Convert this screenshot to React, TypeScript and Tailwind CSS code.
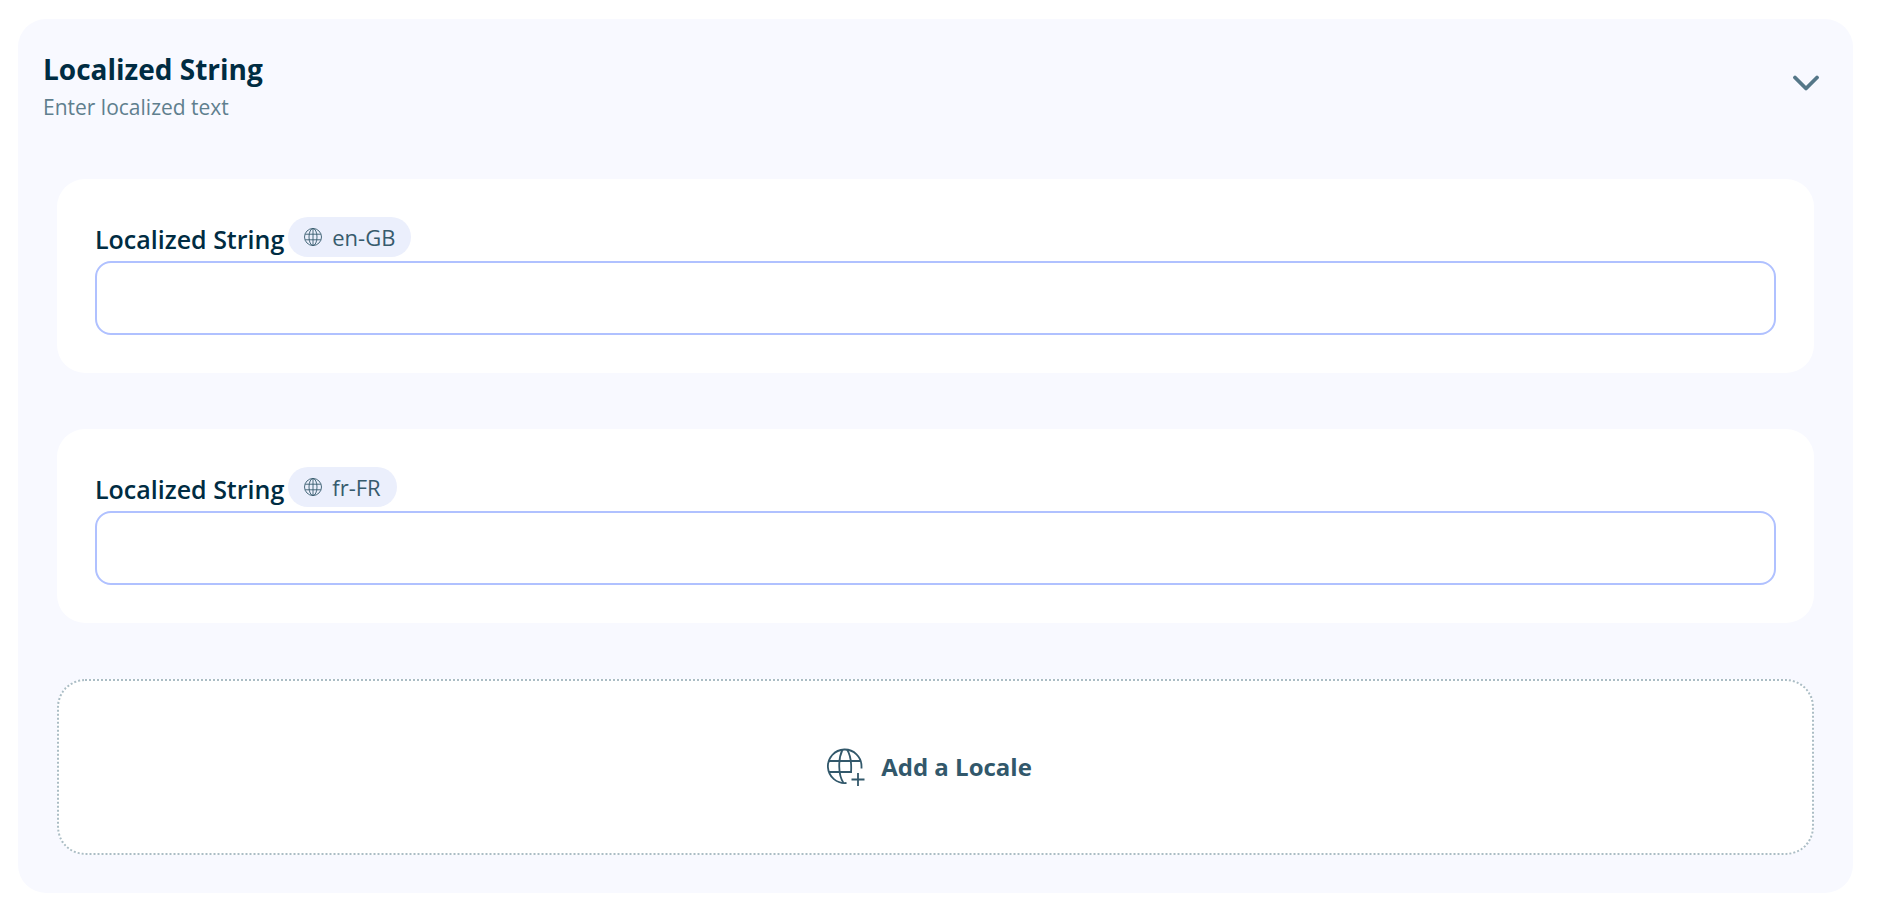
import { useState } from "react";

interface IconProps {
  className?: string;
}

function GlobeIcon({ className }: IconProps) {
  return (
    <svg className={className} viewBox="0 0 18 18" fill="none" stroke="currentColor" strokeWidth="0.9" aria-hidden="true">
      <circle cx="9" cy="9" r="8.5" />
      <ellipse cx="9" cy="9" rx="4" ry="8.5" />
      <path d="M9 .5v17M1.2 6.200h15.600M1.2 11.800h15.600" />
    </svg>
  );
}

function GlobePlusIcon({ className }: IconProps) {
  return (
    <svg className={className} viewBox="0 0 38 38" fill="none" stroke="currentColor" strokeWidth="1.8" aria-hidden="true">
      <path d="M34.500 20.5V18.5A16.800 16.800 0 1 0 19.500 35" />
      <path d="M15.500 1.5C11 11 11 27 16.500 35M20 1.5C23.500 7 24.700 15 24 25" />
      <path d="M2 13H34M2 24H24.800" />
      <path d="M31 25v13M24.500 31.500h13" />
    </svg>
  );
}

function ChevronIcon({ className }: IconProps) {
  return (
    <svg className={className} viewBox="0 0 28 16" fill="none" stroke="currentColor" strokeWidth="3.8" strokeLinecap="round" strokeLinejoin="round" aria-hidden="true">
      <path d="M3 2.500 14 13.500 25 2.500" />
    </svg>
  );
}

function LocaleField({ locale }: { locale: string }) {
  const id = `localized-${locale}`;

  return (
    <div className="rounded-[28px] bg-white p-[38px]">
      <div className="flex h-11 items-start gap-1">
        <label htmlFor={id} className="pt-1 text-[25px] leading-9 font-semibold text-[#002c42]">
          Localized String
        </label>
        <span className="flex h-10 items-center gap-2.5 rounded-full bg-[#ebeffc] px-4 text-[22px] text-[#375b6d]">
          <GlobeIcon className="size-[18px]" />
          {locale}
        </span>
      </div>
      <input
        id={id}
        type="text"
        className="block h-[74px] w-full rounded-2xl border-2 border-[#b0c1ff] bg-white px-5 text-[22px] text-[#002c42] outline-none"
      />
    </div>
  );
}

export default function App() {
  const [open, setOpen] = useState(true);
  const locales = ["en-GB", "fr-FR"];

  return (
    <div className="bg-white pt-[19px] pr-[27px] pb-5 pl-[18px] font-['Open_Sans',sans-serif]">
      <section className="rounded-[28px] bg-[#f8f9ff] px-[39px] pt-[30px] pb-[38px]">
        {/* Header */}
        <header className="-mx-[14px] flex h-[130px] items-start justify-between">
          <div>
            <h2 className="text-[28px] leading-10 font-bold text-[#002c42]">Localized String</h2>
            <p className="text-[21px] leading-9 text-[#5f7f8e]">Enter localized text</p>
          </div>
          <button
            type="button"
            aria-label="Toggle section"
            aria-expanded={open}
            onClick={() => setOpen(!open)}
            className="mt-[18px] p-2 text-[#557788] hover:cursor-pointer"
          >
            <ChevronIcon className="h-4 w-7" />
          </button>
        </header>

        {open && (
          <div className="flex flex-col gap-14">
            {locales.map((locale) => (
              <LocaleField key={locale} locale={locale} />
            ))}

            <button
              type="button"
              className="flex h-[176px] items-center justify-center gap-4 rounded-[28px] border-2 border-dotted border-[#abbdc5] bg-white pr-3 text-[24px] font-bold text-[#32586b] hover:cursor-pointer"
            >
              <GlobePlusIcon className="size-[38px]" />
              Add a Locale
            </button>
          </div>
        )}
      </section>
    </div>
  );
}
